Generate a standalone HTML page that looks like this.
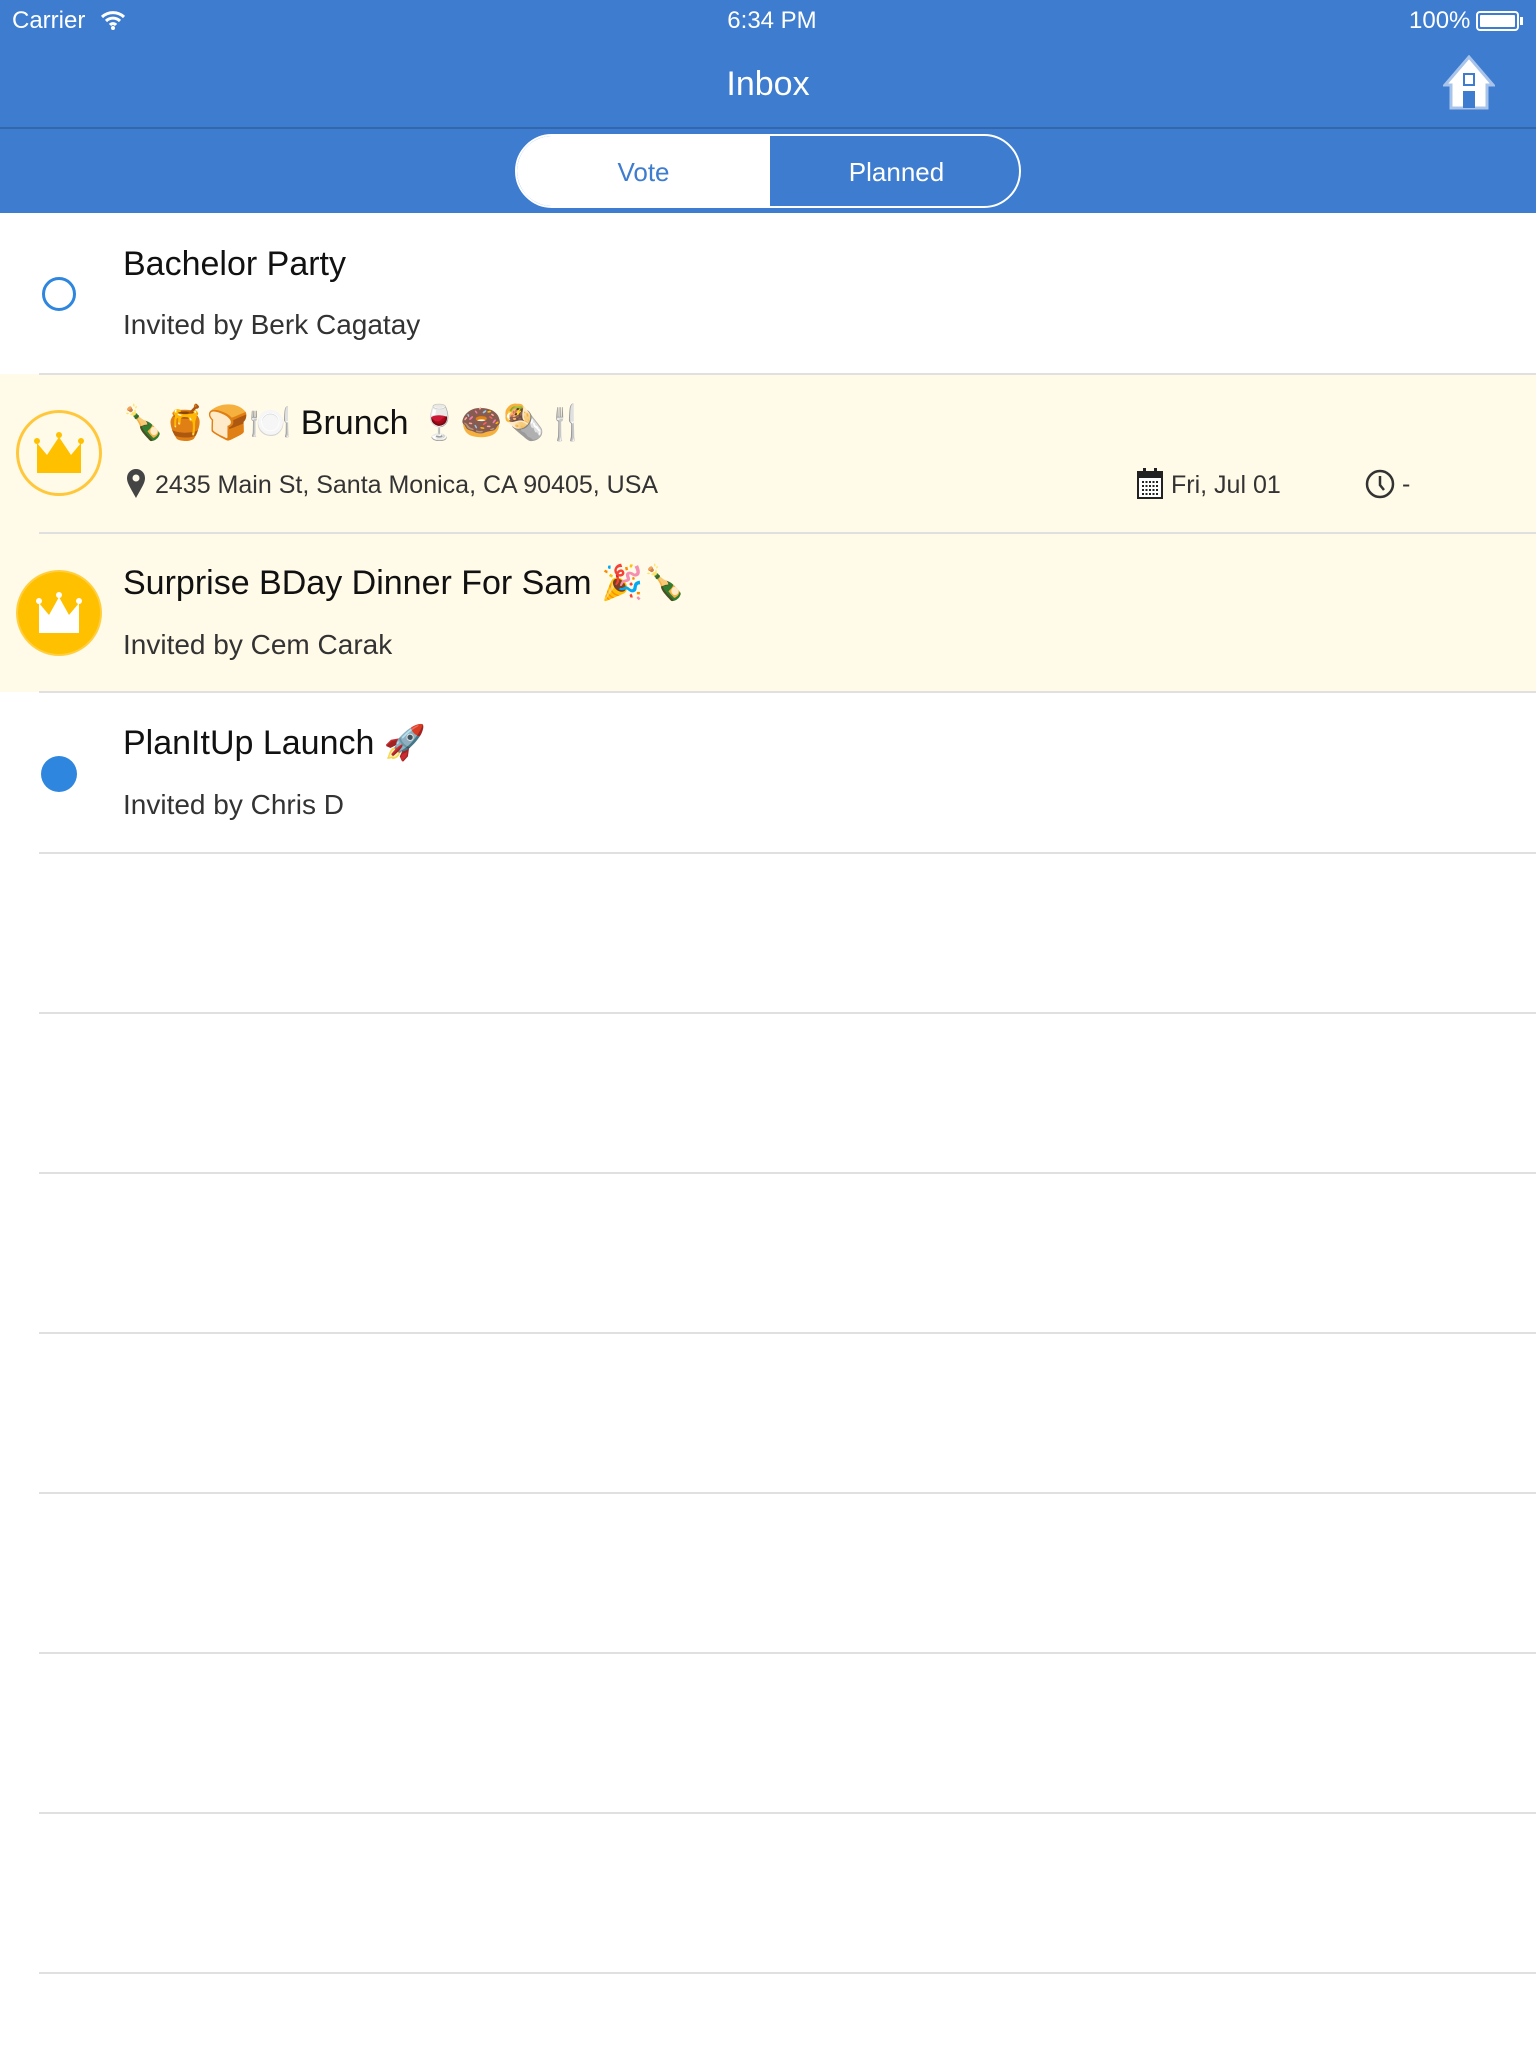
<!DOCTYPE html><html><head><meta charset="utf-8"><style>
*{margin:0;padding:0;box-sizing:border-box}
body{width:1536px;height:2048px;background:#fff;font-family:"Liberation Sans","Noto Sans CJK JP",sans-serif;position:relative;overflow:hidden;color:#111}
.hdr{position:absolute;left:0;top:0;width:1536px;height:213px;background:#3d7ccf}
.line{position:absolute;left:0;top:127px;width:1536px;height:2px;background:#3367ad}
.abs{position:absolute}
.sep{position:absolute;left:39px;right:0;height:2px;background:#e0e0e0}
.t{position:absolute;left:123px;font-size:34px;color:#111}
.s{position:absolute;left:123px;font-size:28px;color:#333}
</style></head><body>
<div class="hdr"></div><div class="line"></div>
<div class="abs" style="left:12px;top:7px;font-size:24px;color:#fff">Carrier</div>
<svg class="abs" style="left:100px;top:10px" width="26" height="20" viewBox="0 0 26 20"><path d="M2 7a16 16 0 0 1 22 0M6 11a10 10 0 0 1 14 0M10 15a4 4 0 0 1 6 0" stroke="#fff" stroke-width="3" fill="none"/><circle cx="13" cy="18" r="2" fill="#fff"/></svg>
<div class="abs" style="left:0;width:1544px;text-align:center;top:7px;font-size:24px;color:#fff">6:34 PM</div>
<div class="abs" style="left:1409px;top:7px;font-size:24px;color:#fff">100%</div>
<div class="abs" style="left:1476px;top:11px;width:43px;height:20px;border:2px solid #fff;border-radius:4px;padding:2px"><div style="background:#fff;width:100%;height:100%;border-radius:1px"></div></div>
<div class="abs" style="left:1520px;top:17px;width:3px;height:8px;background:#fff"></div>
<div class="abs" style="left:0;width:1536px;text-align:center;top:65px;font-size:34px;color:#fff">Inbox</div>
<svg class="abs" style="left:1443px;top:55px" width="52" height="55" viewBox="0 0 52 55"><path d="M26 2L2 30h6v23h36V30h6z" fill="#fff" stroke="#a9c4ea" stroke-width="3"/><rect x="20" y="18" width="12" height="13" fill="#3d7ccf"/><rect x="22" y="20" width="8" height="9" fill="#fff"/><rect x="20" y="36" width="12" height="17" fill="#3d7ccf"/></svg>
<div class="abs" style="left:515px;top:134px;width:506px;height:74px;border:2px solid #fff;border-radius:37px;overflow:hidden">
<div class="abs" style="left:0;top:0;width:253px;height:70px;background:#fff;color:#3d7ccf;font-size:26px;text-align:center;line-height:72px">Vote</div>
<div class="abs" style="left:253px;top:0;width:253px;height:70px;color:#fff;font-size:26px;text-align:center;line-height:72px">Planned</div></div>

<div class="abs" style="left:0;top:374px;width:1536px;height:318px;background:#fffbe8"></div>
<div class="abs" style="left:42px;top:277px;width:34px;height:34px;border:3px solid #2e86de;border-radius:50%"></div>
<div class="t" style="top:245px">Bachelor Party</div>
<div class="s" style="top:309px">Invited by Berk Cagatay</div>
<div class="sep" style="top:373px"></div>
<div class="abs" style="left:16px;top:410px;width:86px;height:86px;border:3px solid #ffc83c;border-radius:50%"></div>
<svg class="abs" style="left:33px;top:428px" width="52" height="50" viewBox="0 0 52 50"><path d="M4 15l10 12 12-18 12 18 10-12v30H4z" fill="#ffc000"/><circle cx="4" cy="13" r="3" fill="#ffc000"/><circle cx="26" cy="7" r="3" fill="#ffc000"/><circle cx="48" cy="13" r="3" fill="#ffc000"/></svg>
<div class="t" style="top:403px;left:122px">🍾🍯🍞🍽️ Brunch 🍷🍩🌯🍴</div>
<svg class="abs" style="left:126px;top:469px" width="20" height="30" viewBox="0 0 20 30"><path d="M10 29C4 18 1 14 1 9a9 9 0 0 1 18 0c0 5-3 9-9 20z" fill="#444"/><circle cx="10" cy="9" r="3.5" fill="#fffbe8"/></svg>
<div class="s" style="top:471px;left:155px;font-size:25px">2435 Main St, Santa Monica, CA 90405, USA</div>
<svg class="abs" style="left:1137px;top:467px" width="26" height="32" viewBox="0 0 26 32"><rect x="1" y="5" width="24" height="26" fill="#fff" stroke="#222" stroke-width="2"/><rect x="1" y="5" width="24" height="6" fill="#222"/><rect x="6" y="1" width="3" height="7" fill="#222"/><rect x="17" y="1" width="3" height="7" fill="#222"/><path d="M5 15h16M5 19h16M5 23h16M5 27h16" stroke="#222" stroke-width="2" stroke-dasharray="2 1.5"/></svg>
<div class="s" style="top:471px;left:1171px;font-size:25px">Fri, Jul 01</div>
<svg class="abs" style="left:1365px;top:469px" width="30" height="30" viewBox="0 0 30 30"><circle cx="15" cy="15" r="13" fill="none" stroke="#333" stroke-width="2.5"/><path d="M15 7v9l4 5" stroke="#333" stroke-width="2.5" fill="none"/></svg>
<div class="s" style="top:470px;left:1402px;font-size:25px">-</div>
<div class="sep" style="top:532px"></div>
<div class="abs" style="left:16px;top:570px;width:86px;height:86px;background:#ffc000;border:2px solid #ffcf40;border-radius:50%"></div>
<svg class="abs" style="left:33px;top:588px" width="52" height="50" viewBox="0 0 52 50"><path d="M6 15l10 12 10-18 10 18 10-12v30H6z" fill="#fff"/><circle cx="6" cy="13" r="3" fill="#fff"/><circle cx="26" cy="7" r="3" fill="#fff"/><circle cx="46" cy="13" r="3" fill="#fff"/></svg>
<div class="t" style="top:563px">Surprise BDay Dinner For Sam 🎉🍾</div>
<div class="s" style="top:629px">Invited by Cem Carak</div>
<div class="sep" style="top:691px"></div>
<div class="abs" style="left:41px;top:756px;width:36px;height:36px;background:#2e86de;border-radius:50%"></div>
<div class="t" style="top:723px">PlanItUp Launch 🚀</div>
<div class="s" style="top:789px">Invited by Chris D</div>
<div class="sep" style="top:852px"></div>
<div class="sep" style="top:1012px"></div>
<div class="sep" style="top:1172px"></div>
<div class="sep" style="top:1332px"></div>
<div class="sep" style="top:1492px"></div>
<div class="sep" style="top:1652px"></div>
<div class="sep" style="top:1812px"></div>
<div class="sep" style="top:1972px"></div>
</body></html>
